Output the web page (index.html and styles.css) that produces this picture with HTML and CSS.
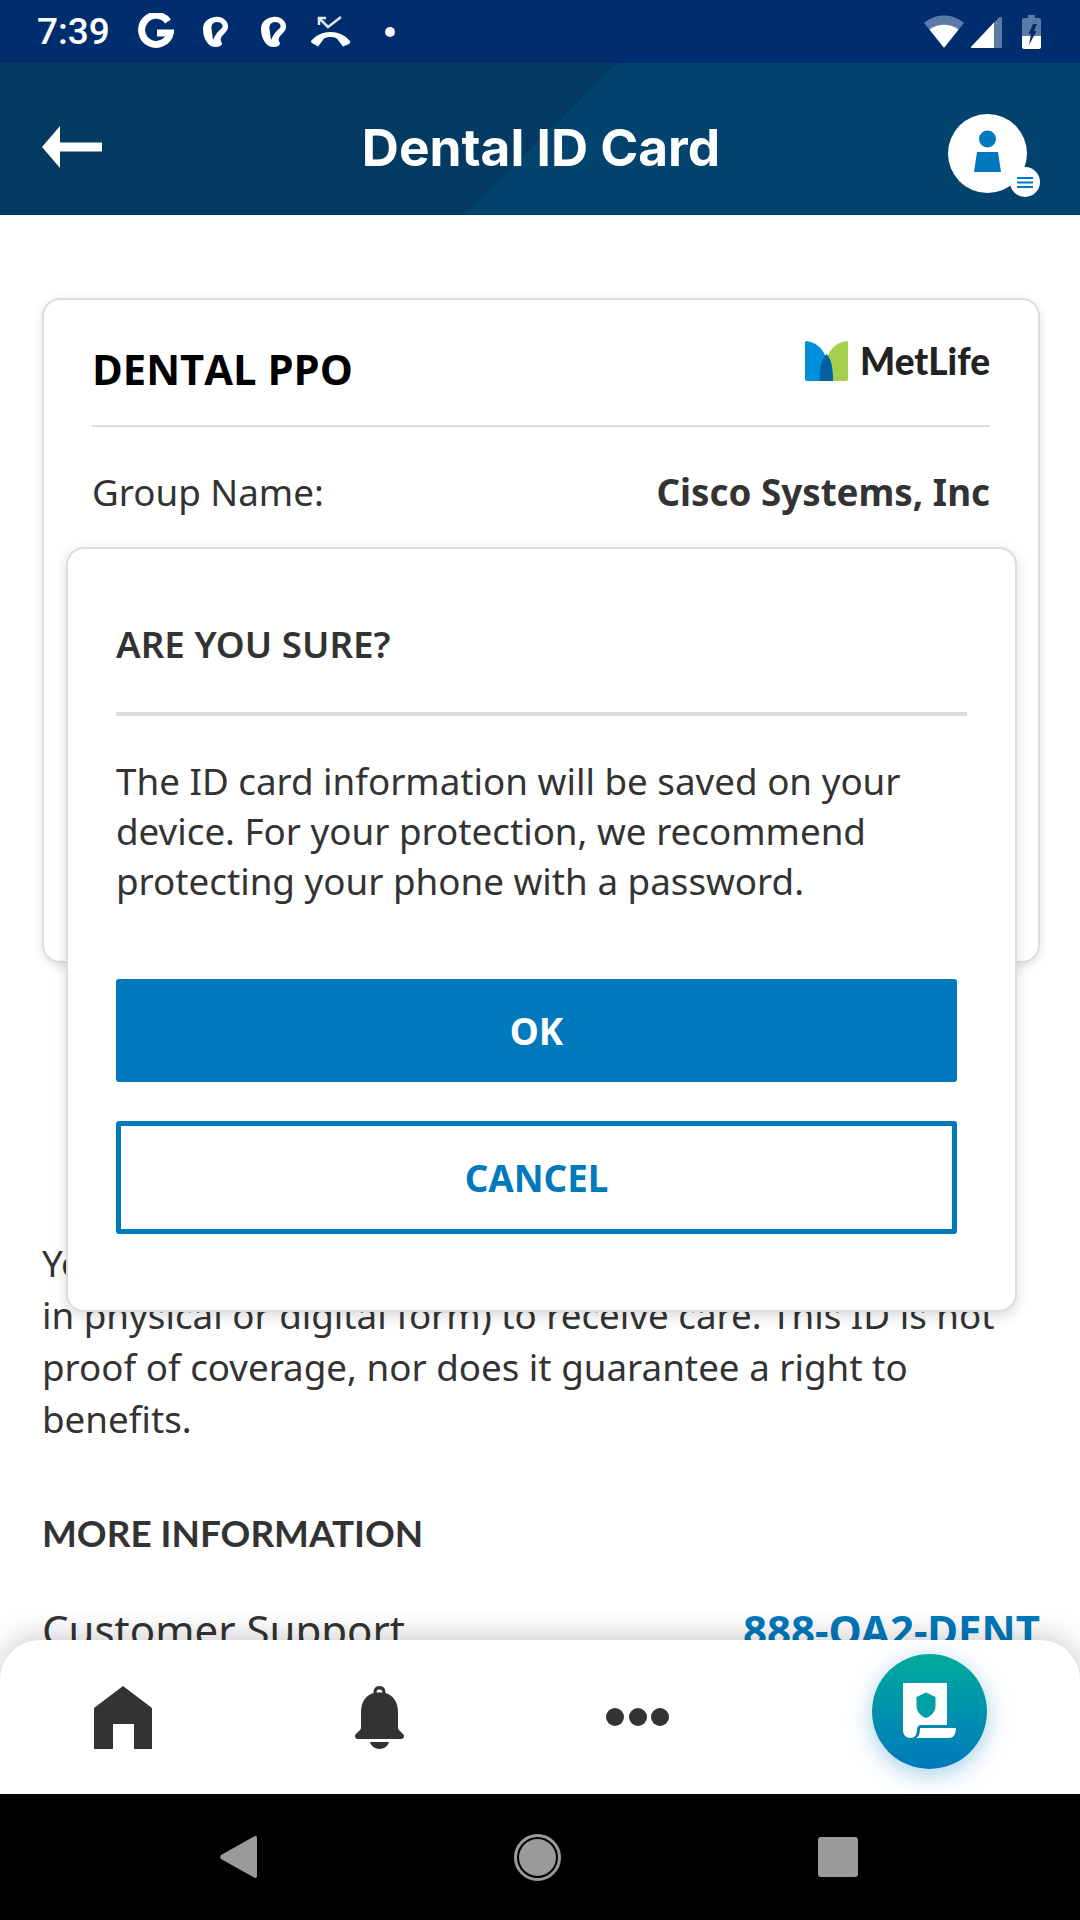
FILE: index.html
```html
<!DOCTYPE html>
<html>
<head>
	<meta charset="UTF-8">
	<title>Dental ID Card</title>
	<link rel="stylesheet" href="styles.css">
</head>
<body>
<div class="screen">
	<div class="status-bar">
		<span class="clock">7:39</span>
		<svg class="st-g" width="36" height="38" viewBox="0 0 36 38"><path d="M30 8.500A14.500 14.500 0 1 0 32.300 20H19" fill="none" stroke="#fff" stroke-width="7"/></svg>
		<svg class="st-ear" width="26" height="32" viewBox="0 0 26 32"><path d="M12 1C19 0 26 5 25 12C24 16 20 18 18 22C17 25 19 26 19 28C18 31 12 32 8 30C3 27 0 20 0 13C0 6 5 2 12 1ZM14 6C10 6 8 9 8.500 13C9 17 9.500 20 10 24C12 19 15 15 19 12C21 9 18 6 14 6Z" fill="#fff" fill-rule="evenodd"/></svg>
		<svg class="st-ear" width="26" height="32" viewBox="0 0 26 32"><path d="M12 1C19 0 26 5 25 12C24 16 20 18 18 22C17 25 19 26 19 28C18 31 12 32 8 30C3 27 0 20 0 13C0 6 5 2 12 1ZM14 6C10 6 8 9 8.500 13C9 17 9.500 20 10 24C12 19 15 15 19 12C21 9 18 6 14 6Z" fill="#fff" fill-rule="evenodd"/></svg>
		<svg class="st-call" width="40" height="31" viewBox="0 0 40 31">
			<path d="M8 9V2H15M8 2L17 11L30 1" fill="none" stroke="#dfe6f0" stroke-width="2.500"/>
			<path d="M0 25C10 13 29 13 39 25C40 26 39 27 38 28L32 30.500L27 24C26 22 24 21 20 21C15 21 13 22 12 24L7 30.500L1 27C0 26 0 26 0 25Z" fill="#fff"/>
		</svg>
		<span class="st-dot"></span>
		<span class="st-right">
			<svg width="40" height="33" viewBox="0 0 40 33"><path d="M0 8C11 -2 29 -2 40 8L20 33Z" fill="#5b7aa6"/><path d="M5.500 14.500C13 8 27 8 34.500 14.500L21 31.500C20.500 32.500 19.500 32.500 19 31.500Z" fill="#fff"/></svg>
			<svg width="31" height="32" viewBox="0 0 31 32"><path d="M0 31L28 1.500C29 .5 31 1 31 2V31C31 31.500 30.500 32 30 32H1C0 32 -.5 31.500 0 31Z" fill="#5b7aa6"/><path d="M0 31L23 6.500V32H1C0 32 -.5 31.500 0 31Z" fill="#fff"/></svg>
			<svg width="19" height="34" viewBox="0 0 19 34"><path d="M6 0H13V3H17C18 3 19 4 19 5V21H0V5C0 4 1 3 2 3H6Z" fill="#5b7aa6"/><path d="M0 21H19V32C19 33 18 34 17 34H2C1 34 0 33 0 32Z" fill="#fff"/><path d="M11 9H15L12 16H14.500L7 30L9 19H6.500Z" fill="#002d6e"/></svg>
		</span>
	</div>

	<div class="app-header">
		<svg class="back" width="60" height="42" viewBox="0 0 60 42"><path d="M0 21L18 0V16.500H60V25.500H18V42Z" fill="#fff"/></svg>
		<h1>Dental ID Card</h1>
		<svg class="avatar" width="92" height="84" viewBox="0 0 92 84">
			<circle cx="39.500" cy="39.500" r="39.500" fill="#fff"/>
			<circle cx="39.500" cy="25" r="8.500" fill="#0079c1"/>
			<path d="M29 38H50L53 58H26Z" fill="#0079c1"/>
			<circle cx="77" cy="68" r="15" fill="#fff"/>
			<path d="M69 64H85M69 68.500H85M69 73H85" stroke="#0079c1" stroke-width="2"/>
		</svg>
	</div>

	<div class="content">
		<div class="card">
			<div class="card-head">
				<h2>DENTAL PPO</h2>
				<div class="logo">
					<svg width="43" height="40" viewBox="0 0 43 40">
						<path d="M0 2C0 .5 1 0 2 0C12 2 19 8 22 20V40H2C1 40 0 39 0 38Z" fill="#0090da"/>
						<path d="M43 2C43 .5 42 0 41 0C31 2 24 8 21 20V40H41C42 40 43 39 43 38Z" fill="#a4ce4e"/>
						<path d="M21.500 13C26 18 28 25 28 40H14.500C14.500 25 17 18 21.500 13Z" fill="#0061a0"/>
					</svg>
					<span>MetLife</span>
				</div>
			</div>
			<div class="row">
				<span>Group Name:</span>
				<b>Cisco Systems, Inc</b>
			</div>
		</div>

		<p class="note">You do not need an ID card (either<br>in physical or digital form) to receive care. This ID is not proof of coverage, nor does it guarantee a right to benefits.</p>

		<h3>MORE INFORMATION</h3>
		<div class="row support">
			<span>Customer Support</span>
			<b>888-OA2-DENT</b>
		</div>
	</div>

	<div class="dialog">
		<h2>ARE YOU SURE?</h2>
		<p>The ID card information will be saved on your device. For your protection, we recommend protecting your phone with a password.</p>
		<button class="btn-ok">OK</button>
		<button class="btn-cancel">CANCEL</button>
	</div>

	<div class="bottom-nav">
		<svg width="58" height="63" viewBox="0 0 58 63"><path d="M29 0L58 22V63H40V38H19V63H0V22Z" fill="#333"/></svg>
		<svg width="49" height="63" viewBox="0 0 49 63">
			<path d="M24.500 0C29 0 30.500 3 30.500 7C38 9 43 16 43 26V42C43 45 49 47 49 50C49 52 48 53 46 53H3C1 53 0 52 0 50C0 47 6 45 6 42V26C6 16 11 9 18.500 7C18.500 3 20 0 24.500 0ZM24.500 3.500C22 3.500 21.500 5 21.500 6.500H27.500C27.500 5 27 3.500 24.500 3.500Z" fill="#333" fill-rule="evenodd"/>
			<path d="M15 56H34C33 60 29 63 24.500 63C20 63 16 60 15 56Z" fill="#333"/>
		</svg>
		<svg width="63" height="18" viewBox="0 0 63 18"><circle cx="9" cy="9" r="9" fill="#333"/><circle cx="32" cy="9" r="9" fill="#333"/><circle cx="54" cy="9" r="9" fill="#333"/></svg>
		<div class="fab">
			<svg width="53" height="56" viewBox="0 0 53 56">
				<path d="M0 0H44V42H18C15 42 14 45 14 47C14 52 11 55 8 55C3 55 0 52 0 47Z" fill="#fff"/>
				<path d="M17 45H53C53 50 51 55 46 55H13C16 54 17 50 17 45Z" fill="#fff"/>
				<path d="M23 9.500L32.500 14V23C32.500 29 28 33 23 35C18 33 13.500 29 13.500 23V14Z" fill="#00a0a4"/>
			</svg>
		</div>
	</div>

	<div class="android-nav">
		<svg width="37" height="42" viewBox="0 0 37 42"><path d="M1 19L34 .5C36 -.5 37 .5 37 2V40C37 41.500 36 42.500 34 41.500L1 23C0 22 0 20 1 19Z" fill="#9a9a9a"/></svg>
		<svg width="47" height="47" viewBox="0 0 47 47"><circle cx="23.500" cy="23.500" r="22" fill="none" stroke="#9a9a9a" stroke-width="3"/><circle cx="23.500" cy="23.500" r="18.500" fill="#9a9a9a"/></svg>
		<span class="nav-square"></span>
	</div>
</div>
</body>
</html>
```
FILE: styles.css
```css
*{
	box-sizing: border-box;
}
body{
	margin: 0;
	background: #fff;
	font-family: "Noto Sans", sans-serif;
	color: #333;
}
h1, h2, h3, p{
	margin: 0;
}
.screen{
	position: relative;
	width: 1080px;
	height: 1920px;
	overflow: hidden;
	display: flex;
	flex-direction: column;
}

/* status bar */
.status-bar{
	height: 63px;
	flex: none;
	background: #002d6e;
	display: flex;
	align-items: center;
	padding-left: 37px;
	color: #fff;
}
.clock{
	font-family: Roboto, sans-serif;
	font-weight: 500;
	font-size: 37px;
	width: 101px;
}
.st-g{
	margin-top: 1px;
	margin-right: 29px;
}
.st-ear{
	margin-right: 32px;
}
.st-call{
	margin-left: -8px;
	margin-right: 34px;
}
.st-dot{
	width: 10px;
	height: 10px;
	border-radius: 50%;
	background: #fff;
}
.st-right{
	margin-left: auto;
	margin-right: 39px;
	display: flex;
	align-items: center;
	gap: 7px;
}
.st-right svg:last-child{
	margin-left: 13px;
}

/* header */
.app-header{
	height: 152px;
	flex: none;
	background: linear-gradient(135deg, #033a62 50%, #03446f 50%);
	display: grid;
	grid-template-columns: 1fr auto 1fr;
	align-items: center;
	padding: 16px 40px 0 42px;
}
.app-header h1{
	font-family: Inter, sans-serif;
	font-weight: 700;
	font-size: 51.400px;
	color: #fff;
}
.avatar{
	justify-self: end;
	margin-top: 18px;
}

/* page behind the dialog */
.content{
	flex: 1;
	padding: 83px 40px 0 42px;
	overflow: hidden;
}
.card{
	height: 665px;
	border: 2px solid #ddd;
	border-radius: 18px;
	padding: 0 48px;
	box-shadow: 0 3px 10px rgba(0,0,0,.12);
}
.card-head{
	display: flex;
	justify-content: space-between;
	align-items: flex-start;
	padding: 39px 0 26px;
	border-bottom: 2px solid #ddd;
}
.card-head h2{
	font-family: "Open Sans", sans-serif;
	font-weight: 700;
	font-size: 41.700px;
	line-height: 60px;
	color: #000;
}
.logo{
	display: flex;
	align-items: center;
	gap: 12px;
	height: 44px;
}
.logo span{
	font-family: Lato, sans-serif;
	font-weight: 900;
	font-size: 37px;
	line-height: 40px;
	color: #222;
}
.row{
	display: flex;
	justify-content: space-between;
	font-size: 36.750px;
	line-height: 44px;
	margin-top: 43px;
}
.row b{
	font-weight: 700;
}
.note{
	font-size: 36.750px;
	line-height: 52px;
	margin-top: 274px;
}
.content h3{
	font-family: Lato, sans-serif;
	font-weight: 700;
	font-size: 36.900px;
	line-height: 44px;
	margin-top: 66px;
}
.support{
	font-size: 42px;
	margin-top: 53px;
}
.support b{
	color: #0079bc;
}

/* dialog */
.dialog{
	position: absolute;
	left: 66px;
	top: 547px;
	width: 951px;
	height: 765px;
	background: #fff;
	border: 2px solid #ddd;
	border-radius: 18px;
	padding: 70px 48px 0 48px;
	box-shadow: 0 4px 14px rgba(0,0,0,.15);
}
.dialog h2{
	font-size: 36.750px;
	font-weight: 600;
	line-height: 50px;
	padding-bottom: 43px;
	border-bottom: 4px solid #ddd;
}
.dialog p{
	font-size: 36.750px;
	line-height: 50px;
	margin-top: 40px;
}
.dialog button{
	display: block;
	width: 841px;
	font-family: "Noto Sans", sans-serif;
	font-size: 36.750px;
	font-weight: 700;
	border-radius: 3px;
}
.btn-ok{
	height: 103px;
	margin-top: 73px;
	background: #007abc;
	border: none;
	color: #fff;
}
.btn-cancel{
	height: 113px;
	margin-top: 39px;
	background: #fff;
	border: 5px solid #007abc;
	color: #007abc;
}

/* bottom tabs */
.bottom-nav{
	position: absolute;
	left: 0;
	right: 0;
	top: 1640px;
	height: 154px;
	background: #fff;
	border-radius: 40px 40px 0 0;
	box-shadow: 0 -4px 30px rgba(0,0,0,.2);
	display: flex;
	align-items: center;
	justify-content: space-between;
	padding: 0 93px 0 94px;
}
.fab{
	width: 115px;
	height: 115px;
	margin-bottom: 12px;
	border-radius: 50%;
	background: linear-gradient(#00ab9d, #0079bc);
	box-shadow: 0 6px 24px rgba(0,121,188,.35);
	display: flex;
	align-items: center;
	justify-content: center;
}

/* android buttons */
.android-nav{
	height: 126px;
	flex: none;
	background: #000;
	position: relative;
	display: flex;
	align-items: center;
	justify-content: space-between;
	padding: 0 222px 0 220px;
}
.nav-square{
	width: 40px;
	height: 40px;
	border-radius: 3px;
	background: #9a9a9a;
}
```
